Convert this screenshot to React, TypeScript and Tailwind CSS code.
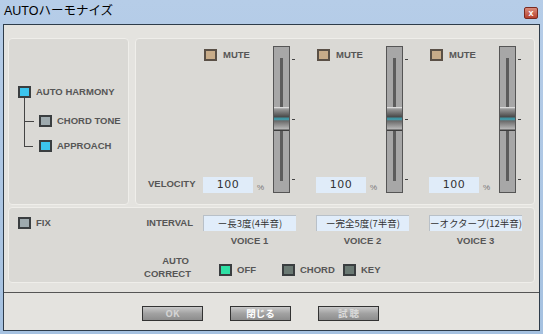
import React from 'react';

const font = "font-['Liberation_Sans','Noto_Sans_CJK_JP',sans-serif]";
const jp = "font-['Noto_Sans_CJK_JP','Liberation_Sans',sans-serif]";

const Check: React.FC<{ fill: string }> = ({ fill }) => (
  <span className={`block w-[13px] h-[12px] border-2 border-[#3a3e40] ${fill}`} />
);

const Label: React.FC<{ children: React.ReactNode; className?: string }> = ({ children, className = '' }) => (
  <span className={`text-[9.5px] font-bold text-[#565656] leading-none ${className}`}>{children}</span>
);

const Slider: React.FC<{ id: string }> = ({ id }) => (
  <svg width="24" height="147" viewBox="0 0 24 147">
    <defs>
      <linearGradient id={`k${id}`} x1="0" y1="0" x2="0" y2="1">
        <stop offset="0" stopColor="#f2f2f2" />
        <stop offset="0.08" stopColor="#9a9a9a" />
        <stop offset="0.4" stopColor="#4c4c4c" />
        <stop offset="0.5" stopColor="#3aa6b8" />
        <stop offset="0.58" stopColor="#6a6a6a" />
        <stop offset="0.9" stopColor="#b4b4b4" />
        <stop offset="1" stopColor="#1e1e1e" />
      </linearGradient>
    </defs>
    <rect x="0.5" y="0.5" width="16" height="146" fill="#a7a7a7" stroke="#555" />
    <rect x="7" y="12" width="3" height="123" fill="#5c5c5c" />
    <rect x="1" y="61" width="15" height="24" fill={`url(#k${id})`} />
    <line x1="19" y1="13.5" x2="22" y2="13.5" stroke="#444" />
    <line x1="19" y1="73.5" x2="22" y2="73.5" stroke="#444" />
    <line x1="19" y1="133.5" x2="22" y2="133.5" stroke="#444" />
  </svg>
);

const VoiceColumn: React.FC<{ id: string; className?: string }> = ({ id, className = '' }) => (
  <div className={`flex ${className}`}>
    <div className="w-[70px] flex flex-col justify-between pt-[3px]">
      <div className="flex items-center gap-[6px] pl-[1px]">
        <Check fill="bg-[#c8ac89] border-[#5a5046]" />
        <Label>MUTE</Label>
      </div>
      <div className="flex items-end gap-[4px]">
        <div className={`w-[50px] h-[16px] bg-[#e0ecf9] flex items-center justify-center text-[11px] text-[#333] font-['DejaVu_Sans',sans-serif] tracking-[0.5px]`}>100</div>
        <span className="text-[8px] text-[#777] leading-none pb-[1px]">%</span>
      </div>
    </div>
    <Slider id={id} />
  </div>
);

const Interval: React.FC<{ text: string; voice: string }> = ({ text, voice }) => (
  <div className="flex flex-col w-[93px] items-center">
    <div className={`w-[93px] h-[16px] bg-[#e1edfa] border-t border-l border-[#b8c0c8] flex items-center justify-center whitespace-nowrap overflow-hidden text-[9.5px] text-[#333] ${jp}`}>{text}</div>
    <Label className="mt-[5px] text-[#666]">{voice}</Label>
  </div>
);

const Btn: React.FC<{ text: string; color: string }> = ({ text, color }) => (
  <div className={`w-[61px] h-[15px] border border-[#333] bg-gradient-to-b from-[#c9c9c9] via-[#a2a2a2] to-[#8d8d8d] flex items-center justify-center text-[9.5px] font-bold leading-none ${color} ${jp}`}>{text}</div>
);

export default function App() {
  return (
    <div className={`w-[543px] h-[334px] bg-gradient-to-b from-[#b6cde8] to-[#a5c1e0] px-[3px] pb-[3px] flex flex-col ${font}`}>
      <div className="h-[24px] flex items-center justify-between shrink-0">
        <span className="text-[12.5px] text-black pl-[1px] pb-[1px]">AUTOハーモナイズ</span>
        <span className="w-[14px] h-[12px] mr-[2px] mt-[2px] rounded-[2px] border border-[#7a2a20] bg-gradient-to-b from-[#d98a7a] to-[#b6402e] flex items-center justify-center text-[9px] font-bold text-white leading-none">x</span>
      </div>
      <div className="flex-1 border border-[#2e3c4a] bg-[#e4e3df] flex flex-col">
        <div className="flex gap-[6px] pl-[4px] pr-[4px] pt-[13px]">
          <div className="w-[121px] h-[167px] rounded-[4px] bg-[#dad9d5] border border-[#efeeea] flex flex-col justify-center pl-[9px] pb-[6px]">
            <div className="flex items-center gap-[5px]">
              <Check fill="bg-[#3cc5ee]" />
              <Label>AUTO HARMONY</Label>
            </div>
            <div className="flex">
              <div className="ml-[6px] w-[9px] h-[49px] border-l border-b border-[#444] relative">
                <div className="absolute left-0 top-[23px] w-[9px] border-t border-[#444]" />
              </div>
              <div className="flex flex-col gap-[13px] pt-[17px] pl-[6px]">
                <div className="flex items-center gap-[5px]">
                  <Check fill="bg-[#9eaaae]" />
                  <Label>CHORD TONE</Label>
                </div>
                <div className="flex items-center gap-[5px]">
                  <Check fill="bg-[#3cc5ee]" />
                  <Label>APPROACH</Label>
                </div>
              </div>
            </div>
          </div>
          <div className="flex-1 h-[167px] rounded-[4px] bg-[#dad9d5] border border-[#efeeea] flex pt-[7px] pb-[11px]">
            <div className="w-[67px] flex flex-col justify-end pl-[12px] pb-[5px]">
              <Label>VELOCITY</Label>
            </div>
            <VoiceColumn id="1" className="w-[113px]" />
            <VoiceColumn id="2" className="w-[113px]" />
            <VoiceColumn id="3" />
          </div>
        </div>
        <div className="mx-[4px] mt-[2px] h-[76px] rounded-[4px] bg-[#dad9d5] border border-[#efeeea] grid grid-cols-[194px_113px_113px_1fr] pt-[7px]">
          <div className="flex justify-between pl-[9px] pr-[10px] h-[16px] items-center">
            <div className="flex items-center gap-[5px]">
              <Check fill="bg-[#9eaaae]" />
              <Label>FIX</Label>
            </div>
            <Label>INTERVAL</Label>
          </div>
          <Interval text="ー長3度(4半音)" voice="VOICE 1" />
          <Interval text="ー完全5度(7半音)" voice="VOICE 2" />
          <Interval text="ーオクターブ(12半音)" voice="VOICE 3" />
          <div className="flex flex-col items-end pr-[12px] pt-[7px] gap-[3px]">
            <Label className="pr-[2px]">AUTO</Label>
            <Label>CORRECT</Label>
          </div>
          <div className="col-span-3 flex items-center pl-[16px] pt-[9px]">
            <div className="w-[63px] flex items-center gap-[5px]">
              <Check fill="bg-[#2ee0a4]" />
              <Label>OFF</Label>
            </div>
            <div className="w-[61px] flex items-center gap-[5px]">
              <Check fill="bg-[#6a7973]" />
              <Label>CHORD</Label>
            </div>
            <div className="flex items-center gap-[5px]">
              <Check fill="bg-[#6a7973]" />
              <Label>KEY</Label>
            </div>
          </div>
        </div>
        <div className="mt-[9px] border-t border-[#555] flex gap-[27px] pl-[138px] pt-[13px]">
          <Btn text="OK" color="text-[#d4d4d4]" />
          <Btn text="閉じる" color="text-white" />
          <Btn text="試 聴" color="text-[#dadada]" />
        </div>
      </div>
    </div>
  );
}
